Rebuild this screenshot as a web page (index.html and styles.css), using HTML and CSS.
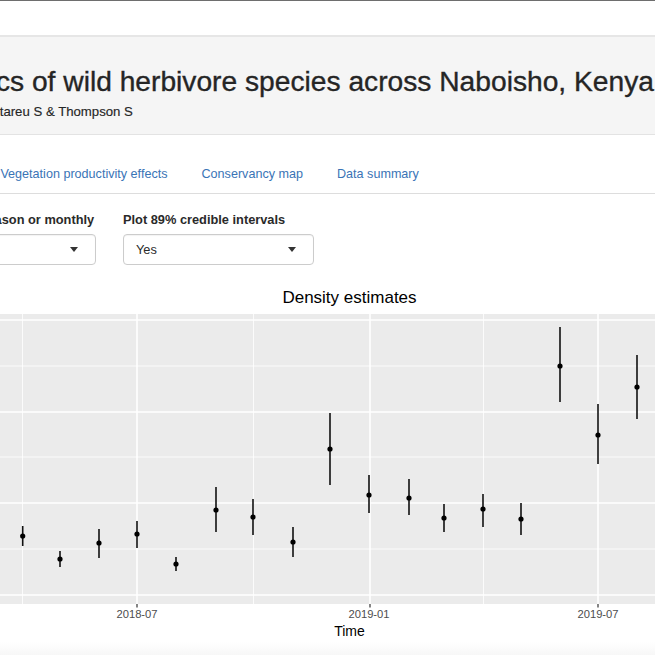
FILE: index.html
```html
<!DOCTYPE html>
<html lang="en">
<head>
<meta charset="utf-8">
<title>Population dynamics of wild herbivore species across Naboisho, Kenya</title>
<link rel="stylesheet" href="styles.css">
</head>
<body>
<div class="navbar"></div>
<header class="title-panel">
  <h1 class="title">Population dynamics of wild herbivore species across Naboisho, Kenya</h1>
  <p class="authors">Kitareu S &amp; Thompson S</p>
</header>
<ul class="tabs">
  <li class="tab active"><a>Density estimates</a></li>
  <li class="tab"><a>Vegetation productivity effects</a></li>
  <li class="tab"><a>Conservancy map</a></li>
  <li class="tab"><a>Data summary</a></li>
</ul>
<div class="controls">
  <div class="form-group">
    <label class="control-label">Estimate by season or monthly</label>
    <div class="select"><span class="select-value">Season</span><span class="caret"></span></div>
  </div>
  <div class="form-group">
    <label class="control-label">Plot 89% credible intervals</label>
    <div class="select"><span class="select-value">Yes</span><span class="caret"></span></div>
  </div>
</div>
<div class="plot">
<svg class="chart" width="655" height="362" viewBox="0 0 655 362" xmlns="http://www.w3.org/2000/svg">
  <text class="plot-title" x="349.5" y="23" text-anchor="middle">Density estimates</text>
  <rect x="0" y="34" width="655" height="290" fill="#ebebeb"/>
  <g stroke="#ffffff" stroke-width="0.8">
    <line x1="0" y1="86" x2="655" y2="86"/>
    <line x1="0" y1="177" x2="655" y2="177"/>
    <line x1="0" y1="269" x2="655" y2="269"/>
    <line x1="22.5" y1="34" x2="22.5" y2="324"/>
    <line x1="253.5" y1="34" x2="253.5" y2="324"/>
    <line x1="483.5" y1="34" x2="483.5" y2="324"/>
  </g>
  <g stroke="#ffffff" stroke-width="1.6">
    <line x1="0" y1="40" x2="655" y2="40"/>
    <line x1="0" y1="132" x2="655" y2="132"/>
    <line x1="0" y1="223" x2="655" y2="223"/>
    <line x1="0" y1="315" x2="655" y2="315"/>
    <line x1="137" y1="34" x2="137" y2="324"/>
    <line x1="370" y1="34" x2="370" y2="324"/>
    <line x1="598" y1="34" x2="598" y2="324"/>
  </g>
  <g stroke="#333333" stroke-width="1.2">
    <line x1="137" y1="324" x2="137" y2="327.5"/>
    <line x1="370" y1="324" x2="370" y2="327.5"/>
    <line x1="598" y1="324" x2="598" y2="327.5"/>
  </g>
  <g stroke="#111111" stroke-width="1.6">
    <line x1="22.7" y1="246" x2="22.7" y2="266"/>
    <line x1="60" y1="271" x2="60" y2="287"/>
    <line x1="99" y1="249" x2="99" y2="278"/>
    <line x1="137" y1="241" x2="137" y2="268"/>
    <line x1="176" y1="277" x2="176" y2="291"/>
    <line x1="216" y1="207" x2="216" y2="252"/>
    <line x1="253" y1="219" x2="253" y2="255"/>
    <line x1="293" y1="247" x2="293" y2="277"/>
    <line x1="330" y1="133" x2="330" y2="205"/>
    <line x1="369" y1="195" x2="369" y2="233"/>
    <line x1="409" y1="199" x2="409" y2="235"/>
    <line x1="444" y1="224" x2="444" y2="252"/>
    <line x1="483" y1="214" x2="483" y2="247"/>
    <line x1="521" y1="223" x2="521" y2="255"/>
    <line x1="560" y1="47" x2="560" y2="122"/>
    <line x1="598" y1="124" x2="598" y2="184"/>
    <line x1="637" y1="75" x2="637" y2="139"/>
  </g>
  <g fill="#000000">
    <circle cx="22.7" cy="256" r="2.6"/>
    <circle cx="60" cy="279" r="2.6"/>
    <circle cx="99" cy="263" r="2.6"/>
    <circle cx="137" cy="254" r="2.6"/>
    <circle cx="176" cy="284" r="2.6"/>
    <circle cx="216" cy="230" r="2.6"/>
    <circle cx="253" cy="237" r="2.6"/>
    <circle cx="293" cy="262" r="2.6"/>
    <circle cx="330" cy="169" r="2.6"/>
    <circle cx="369" cy="215" r="2.6"/>
    <circle cx="409" cy="218" r="2.6"/>
    <circle cx="444" cy="238" r="2.6"/>
    <circle cx="483" cy="229" r="2.6"/>
    <circle cx="521" cy="239" r="2.6"/>
    <circle cx="560" cy="86" r="2.6"/>
    <circle cx="598" cy="155" r="2.6"/>
    <circle cx="637" cy="107" r="2.6"/>
  </g>
  <g class="tick-label" text-anchor="middle">
    <text x="137" y="338">2018-07</text>
    <text x="369" y="338">2019-01</text>
    <text x="598" y="338">2019-07</text>
  </g>
  <text class="axis-title" x="349.5" y="356" text-anchor="middle">Time</text>
</svg>
</div>
<div class="bottom-shade"></div>
</body>
</html>
```

FILE: styles.css
```css
html, body {
  margin: 0;
  padding: 0;
  background: #ffffff;
  overflow: hidden;
}

body {
  font-family: "Liberation Sans", Arial, Helvetica, sans-serif;
  color: #333333;
  width: 655px;
  height: 655px;
}

.navbar {
  height: 34px;
  border-top: 1px solid #6e6e6e;
  background: #ffffff;
}

.title-panel {
  background: #f5f5f5;
  border-top: 2px solid #e6e6e6;
  border-bottom: 1px solid #e3e3e3;
  padding: 28px 0 13px;
}

.title {
  margin: 0 0 6px -236px;
  font-size: 28.2px;
  line-height: 32px;
  font-weight: normal;
  color: #252525;
  -webkit-text-stroke: 0.35px #252525;
  white-space: nowrap;
}

.authors {
  margin: 0 0 0 -12px;
  font-size: 13.2px;
  line-height: 18px;
  color: #252525;
  -webkit-text-stroke: 0.15px #252525;
  white-space: nowrap;
}

.tabs {
  list-style: none;
  display: flex;
  margin: 19px 0 0 -149px;
  padding: 0;
  border-bottom: 1px solid #dddddd;
  white-space: nowrap;
}

.tab {
  margin-right: 2px;
  margin-bottom: -1px;
}

.tab a {
  display: block;
  padding: 10px 15px;
  font-size: 12.6px;
  line-height: 18px;
  color: #3a74b6;
  border: 1px solid transparent;
  border-radius: 4px 4px 0 0;
}

.tab.active a {
  color: #555555;
  background: #ffffff;
  border-color: #dddddd #dddddd transparent;
}

.controls {
  display: flex;
  gap: 27px;
  margin: 17px 0 0 -95px;
}

.form-group {
  width: 191px;
}

.control-label {
  display: block;
  font-size: 12.8px;
  line-height: 18px;
  font-weight: bold;
  color: #2a2a2a;
  margin-bottom: 5px;
  white-space: nowrap;
}

.select {
  height: 31px;
  box-sizing: border-box;
  border: 1px solid #cccccc;
  border-radius: 4px;
  background: #ffffff;
  box-shadow: inset 0 1px 1px rgba(0, 0, 0, 0.05);
  padding: 0 17px 0 12px;
  display: flex;
  align-items: center;
  justify-content: space-between;
}

.select-value {
  font-size: 12.8px;
  line-height: 18px;
  color: #2a2a2a;
}

.caret {
  width: 0;
  height: 0;
  border-left: 4.5px solid transparent;
  border-right: 4.5px solid transparent;
  border-top: 5px solid #333333;
}

.plot {
  margin-top: 15px;
  height: 362px;
}

.chart {
  display: block;
}

.plot-title {
  font-family: "Liberation Sans", Arial, sans-serif;
  font-size: 17px;
  fill: #000000;
}

.tick-label {
  font-family: "Liberation Sans", Arial, sans-serif;
  font-size: 11.2px;
  fill: #4d4d4d;
}

.axis-title {
  font-family: "Liberation Sans", Arial, sans-serif;
  font-size: 14px;
  fill: #000000;
}

.bottom-shade {
  height: 20px;
  background: linear-gradient(to bottom, #ffffff, #f3f3f3);
}
```
